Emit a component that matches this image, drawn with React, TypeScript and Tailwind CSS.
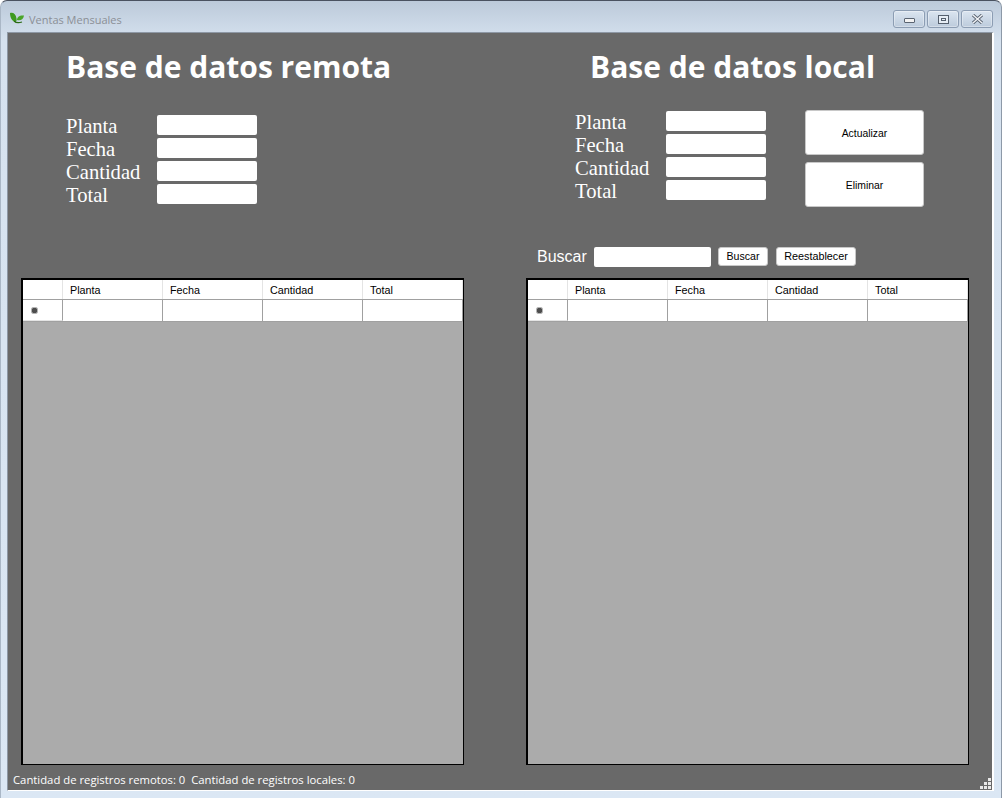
function Row({ label }: { label: string }) {
  return (
    <div className="flex items-start h-[23px]">
      <span className="w-[91px] text-[20.6px] leading-[23px] text-white font-['Liberation_Serif',serif]">{label}</span>
      <div className="w-[100px] h-[20px] bg-white rounded-[2px]" />
    </div>
  );
}

function Grid() {
  const cols = ["Planta", "Fecha", "Cantidad", "Total"];
  return (
    <div className="h-[487px] border border-l-2 border-t-2 border-black bg-[#ababab] font-['Liberation_Sans',sans-serif] text-[10.8px] text-black">
      <div className="flex h-[20px] bg-white border-b border-[#a0a0a0]">
        <div className="w-[40px] border-r border-[#e4e4e4]" />
        {cols.map((c) => (
          <div key={c} className="w-[100px] pl-[7px] border-r border-[#e4e4e4] leading-[20px]">{c}</div>
        ))}
      </div>
      <div className="flex h-[22px] bg-white border-b border-[#a0a0a0]">
        <div className="w-[40px] flex items-center pl-[9px] border-r border-[#a0a0a0] border-b border-b-[#e4e4e4]">
          <div className="w-[5px] h-[5px] rounded-[1px] bg-[#4d4d4d] outline outline-[#b5b5b5]" />
        </div>
        {cols.map((c) => (
          <div key={c} className="w-[100px] border-r border-[#a0a0a0]" />
        ))}
      </div>
    </div>
  );
}

function Caption({ kind }: { kind: "min" | "max" | "close" }) {
  return (
    <div className="w-[32px] h-[18px] rounded-[3px] border border-[#8c9db3] bg-gradient-to-b from-[#dbe5f0] to-[#bccbdc] flex items-center justify-center shadow-[inset_0_0_0_1px_rgba(255,255,255,0.35)]">
      {kind === "min" && <div className="w-[11px] h-[5px] mt-[3px] border border-[#5a6472] bg-[#f2f2f2] rounded-[1px]" />}
      {kind === "max" && (
        <div className="w-[11px] h-[9px] border border-[#55606e] bg-[#e6edf5] flex items-center justify-center">
          <div className="w-[5px] h-[3px] border border-[#55606e]" />
        </div>
      )}
      {kind === "close" && (
        <svg width="13" height="10" viewBox="0 0 13 10">
          <path d="M2 1l9 8M11 1L2 9" stroke="#5a6472" strokeWidth="3.2" fill="none" />
          <path d="M2 1l9 8M11 1L2 9" stroke="#f2f4f7" strokeWidth="1.4" fill="none" />
        </svg>
      )}
    </div>
  );
}

const buttonText = "bg-white rounded-[3px] border border-[#c8c8c8] text-black font-['Liberation_Sans',sans-serif]";

export default function App() {
  return (
    <div className="w-[1003px] h-[798px] bg-white overflow-hidden">
      <div className="w-[1002px] h-[798px] rounded-t-[7px] border-t border-l border-r border-t-[#4a5260] border-l-[#aab7c6] border-r-[#8d99a8] bg-gradient-to-b from-[#bccada] from-[0%] via-[#d6e2ef] via-[5%] to-[#dbe7f4] flex flex-col">
        <div className="h-[31px] flex items-start pl-[8px] pr-[8px]">
          <svg width="16" height="12" viewBox="0 0 16 12" className="mr-[4px] mt-[11px]">
            <path d="M1 1c3-1 6 1 6.500 5.500C8 9 7 10 6.500 10 3.500 9.500 1 6 1 1z" fill="#3f9a1f" />
            <path d="M8 8c0-3 2.500-5 7-4.500C14.500 7 12 9 8 8z" fill="#4aa528" />
            <path d="M5 9c2 2 5 2 8 1" stroke="#2b6a14" strokeWidth="1.200" fill="none" />
          </svg>
          <span className="flex-1 mt-[11px] text-[11px] leading-[16px] text-[#8b8f96] font-['Open_Sans',sans-serif]">Ventas Mensuales</span>
          <div className="flex gap-[2px] mt-[9px]">
            <Caption kind="min" />
            <Caption kind="max" />
            <Caption kind="close" />
          </div>
        </div>
        <div className="ml-[6px] w-[987px] h-[759px] bg-[#696969] border-t border-l border-[#8e98a5] border-r-2 border-b border-r-white border-b-white flex flex-col">
          <div className="flex pl-[13px] gap-[62px]">
            <div className="w-[443px]">
              <div className="h-[245px] flex flex-col">
                <h1 className="pl-[45px] pt-[13px] h-[82px] text-[30px] leading-[41px] font-bold text-white font-['Open_Sans',sans-serif]">Base de datos remota</h1>
                <div className="pl-[45px]">
                  <Row label="Planta" />
                  <Row label="Fecha" />
                  <Row label="Cantidad" />
                  <Row label="Total" />
                </div>
              </div>
              <Grid />
            </div>
            <div className="w-[443px]">
              <div className="h-[245px] flex flex-col">
                <h1 className="pl-[64px] pt-[13px] h-[78px] text-[30px] leading-[41px] font-bold text-white font-['Open_Sans',sans-serif]">Base de datos local</h1>
                <div className="flex pl-[49px]">
                  <div className="w-[230px]">
                    <Row label="Planta" />
                    <Row label="Fecha" />
                    <Row label="Cantidad" />
                    <Row label="Total" />
                  </div>
                  <div className="flex flex-col gap-[7px] mt-[-1px]">
                    <button className={"w-[119px] h-[45px] pt-[2px] text-[10.4px] " + buttonText}>Actualizar</button>
                    <button className={"w-[119px] h-[45px] pt-[2px] text-[10.4px] " + buttonText}>Eliminar</button>
                  </div>
                </div>
                <div className="flex items-start pl-[11px] mt-[40px]">
                  <span className="w-[57px] text-[16px] leading-[20px] text-white font-['Liberation_Sans',sans-serif]">Buscar</span>
                  <div className="w-[117px] h-[20px] bg-white rounded-[2px] mr-[7px]" />
                  <button className={"w-[50px] h-[19px] text-[10.6px] mr-[8px] " + buttonText}>Buscar</button>
                  <button className={"w-[80px] h-[19px] text-[10.8px] " + buttonText}>Reestablecer</button>
                </div>
              </div>
              <Grid />
            </div>
          </div>
          <div className="flex flex-1 items-center justify-between pl-[5px] pr-[1px] text-[11.3px] text-white font-['Open_Sans',sans-serif]">
            <span className="whitespace-pre mt-[5px]">Cantidad de registros remotos: 0  Cantidad de registros locales: 0</span>
            <svg width="11" height="11" viewBox="0 0 11 11" className="self-end mb-[1px]" fill="#e8e8e8">
              <rect x="8" y="0" width="3" height="3" />
              <rect x="4" y="4" width="3" height="3" />
              <rect x="8" y="4" width="3" height="3" />
              <rect x="0" y="8" width="3" height="3" />
              <rect x="4" y="8" width="3" height="3" />
              <rect x="8" y="8" width="3" height="3" />
            </svg>
          </div>
        </div>
      </div>
    </div>
  );
}
